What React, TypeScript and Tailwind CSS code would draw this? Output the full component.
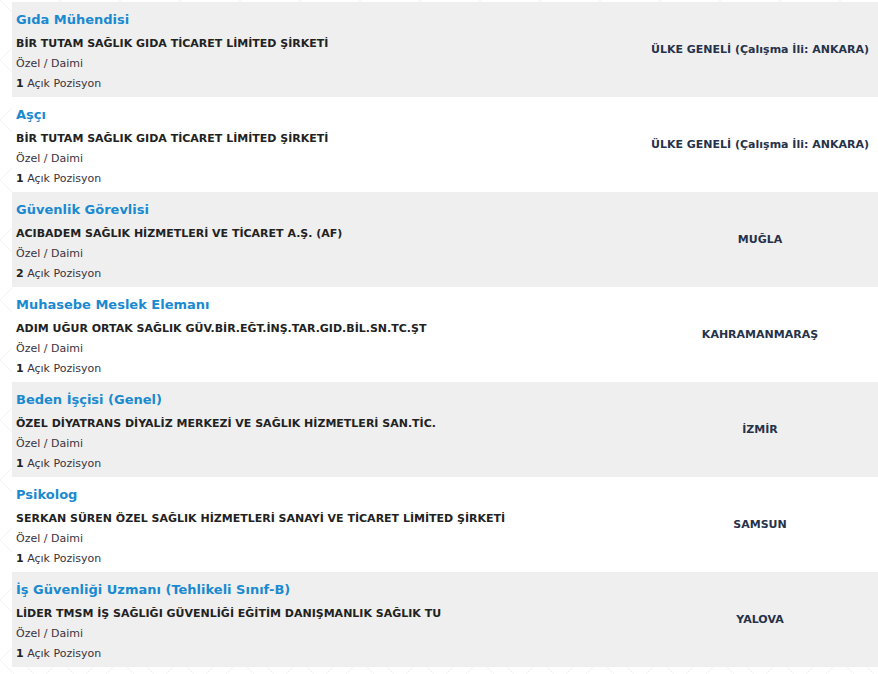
type Ilan = {
  baslik: string
  firma: string
  tur: string
  adet: number
  yer: string
}

const ilanlar: Ilan[] = [
  {
    baslik: 'Gıda Mühendisi',
    firma: 'BİR TUTAM SAĞLIK GIDA TİCARET LİMİTED ŞİRKETİ',
    tur: 'Özel / Daimi',
    adet: 1,
    yer: 'ÜLKE GENELİ (Çalışma İli: ANKARA)',
  },
  {
    baslik: 'Aşçı',
    firma: 'BİR TUTAM SAĞLIK GIDA TİCARET LİMİTED ŞİRKETİ',
    tur: 'Özel / Daimi',
    adet: 1,
    yer: 'ÜLKE GENELİ (Çalışma İli: ANKARA)',
  },
  {
    baslik: 'Güvenlik Görevlisi',
    firma: 'ACIBADEM SAĞLIK HİZMETLERİ VE TİCARET A.Ş. (AF)',
    tur: 'Özel / Daimi',
    adet: 2,
    yer: 'MUĞLA',
  },
  {
    baslik: 'Muhasebe Meslek Elemanı',
    firma: 'ADIM UĞUR ORTAK SAĞLIK GÜV.BİR.EĞT.İNŞ.TAR.GID.BİL.SN.TC.ŞT',
    tur: 'Özel / Daimi',
    adet: 1,
    yer: 'KAHRAMANMARAŞ',
  },
  {
    baslik: 'Beden İşçisi (Genel)',
    firma: 'ÖZEL DİYATRANS DİYALİZ MERKEZİ VE SAĞLIK HİZMETLERİ SAN.TİC.',
    tur: 'Özel / Daimi',
    adet: 1,
    yer: 'İZMİR',
  },
  {
    baslik: 'Psikolog',
    firma: 'SERKAN SÜREN ÖZEL SAĞLIK HİZMETLERİ SANAYİ VE TİCARET LİMİTED ŞİRKETİ',
    tur: 'Özel / Daimi',
    adet: 1,
    yer: 'SAMSUN',
  },
  {
    baslik: 'İş Güvenliği Uzmanı (Tehlikeli Sınıf-B)',
    firma: 'LİDER TMSM İŞ SAĞLIĞI GÜVENLİĞİ EĞİTİM DANIŞMANLIK SAĞLIK TU',
    tur: 'Özel / Daimi',
    adet: 1,
    yer: 'YALOVA',
  },
]

function Desen() {
  // soluk geometrik arka plan
  return (
    <svg className="absolute inset-0 h-full w-full" aria-hidden="true">
      <defs>
        <pattern id="desen" width="120" height="120" patternUnits="userSpaceOnUse">
          <path
            d="M60 0 L120 60 L60 120 L0 60 Z M0 0 L120 120 M120 0 L0 120 M60 20 L100 60 L60 100 L20 60 Z"
            fill="none"
            stroke="#f2f2f2"
            strokeWidth="1"
          />
        </pattern>
      </defs>
      <rect width="100%" height="100%" fill="url(#desen)" />
    </svg>
  )
}

export default function App() {
  return (
    <div
      className="relative h-[674px] w-[878px] overflow-hidden bg-white"
      style={{ fontFamily: '"DejaVu Sans", Verdana, sans-serif' }}
    >
      <Desen />
      <div className="relative pl-3 pt-[2px]">
        {ilanlar.map((ilan, i) => (
          <div
            key={i}
            className={`flex h-[95px] items-stretch ${i % 2 === 0 ? 'bg-[#efefef]' : 'bg-white'}`}
          >
            <div className="flex-1 pl-1 pt-[8px]">
              <div className="text-[13px] font-bold leading-5 text-[#1a8ad0]">{ilan.baslik}</div>
              <div className="mt-1 text-[11px] font-bold leading-5 text-[#222]">{ilan.firma}</div>
              <div className="text-[11px] leading-5 text-[#3a3340]">{ilan.tur}</div>
              <div className="text-[11px] leading-5 text-[#3a3340]">
                <b className="text-[#222]">{ilan.adet}</b> Açık Pozisyon
              </div>
            </div>
            <div className="flex w-[236px] items-center justify-center pt-[2px] text-[11px] font-bold text-[#26324a]">
              {ilan.yer}
            </div>
          </div>
        ))}
      </div>
    </div>
  )
}
